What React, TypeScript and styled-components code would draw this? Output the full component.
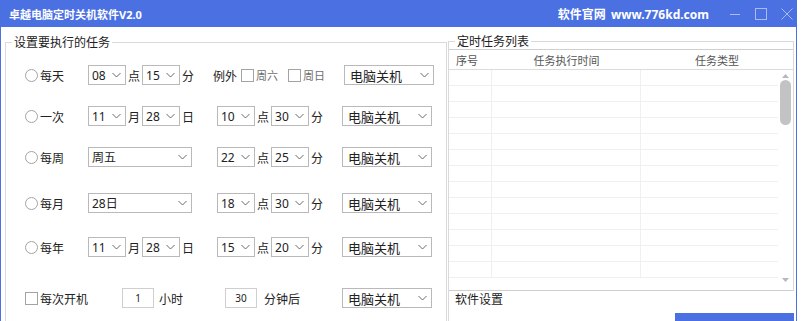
import styled, { createGlobalStyle } from "styled-components";

const GlobalStyle = createGlobalStyle`
    html, body {
        margin: 0;
        padding: 0;
        background: #ffffff;
    }
    body {
        font-family: "Noto Sans", "Noto Sans CJK SC", sans-serif;
        color: #222;
    }
`;

const Window = styled.div`
    width: 801px;
    height: 321px;
    box-sizing: border-box;
    border-left: 1px solid #4b70e2;
    border-right: 4px solid #ffffff;
    box-shadow: inset -1px 0 0 #4b70e2;
    overflow: hidden;
    display: flex;
    flex-direction: column;
    background: #fff;
`;

const TitleBar = styled.div`
    height: 27px;
    flex: none;
    background: #4b70e2;
    display: flex;
    align-items: center;
    padding-left: 8px;
    color: #fff;
    font-weight: 700;
`;

const AppName = styled.div`
    font-size: 11px;
    flex: 1;
`;

const SiteLink = styled.div`
    font-size: 12px;
    margin-right: 20px;
    word-spacing: 2px;
`;

const WinButtons = styled.div`
    display: flex;
    align-items: center;
    gap: 14px;
    margin-right: 4px;
`;

const Body = styled.div`
    flex: 1;
    display: flex;
    align-items: flex-start;
    min-height: 0;
`;

const Group = styled.fieldset<{ $w: number; $mt: number; $ml: number }>`
    margin: ${({ $mt }) => $mt}px 0 0 ${({ $ml }) => $ml}px;
    padding: 0;
    width: ${({ $w }) => $w}px;
    box-sizing: border-box;
    border: 1px solid #dadada;
    height: 340px;
    min-width: 0;
`;

const Legend = styled.legend`
    margin-left: 6px;
    padding: 0 2px;
    font-size: 12px;
    line-height: 16px;
    color: #222;
    font-family: "Noto Sans CJK SC", sans-serif;
`;

const Form = styled.div`
    display: flex;
    flex-direction: column;
`;

const Row = styled.div<{ $mt: number }>`
    display: grid;
    grid-template-columns: 63px 129px 125px auto;
    align-items: center;
    height: 20px;
    padding-left: 19px;
    margin-top: ${({ $mt }) => $mt}px;
    font-family: "Noto Sans CJK SC", sans-serif;
    font-size: 12px;
`;

const Cell = styled.div<{ $ml?: number }>`
    display: flex;
    align-items: center;
    gap: 2px;
    margin-left: ${({ $ml }) => $ml ?? 0}px;
`;

const Choice = styled.label`
    display: flex;
    align-items: center;
    gap: 2px;
    color: #222;
`;

const Radio = styled.span`
    width: 13px;
    height: 13px;
    box-sizing: border-box;
    border: 1px solid #a3a3a3;
    border-radius: 50%;
    background: #fff;
`;

const Check = styled.span<{ $ml?: number }>`
    width: 13px;
    height: 13px;
    box-sizing: border-box;
    border: 1px solid #a3a3a3;
    background: #fff;
    margin-left: ${({ $ml }) => $ml ?? 0}px;
`;

const Unit = styled.span<{ $ml?: number; $muted?: boolean; $size?: number }>`
    font-size: ${({ $size }) => $size ?? 12}px;
    color: ${({ $muted }) => ($muted ? "#6e6e6e" : "#222")};
    margin-left: ${({ $ml }) => $ml ?? 0}px;
    white-space: nowrap;
`;

const SelectBox = styled.div<{ $w: number; $ml?: number }>`
    width: ${({ $w }) => $w}px;
    height: 20px;
    box-sizing: border-box;
    border: 1px solid #b9b9b9;
    background: #fff;
    display: flex;
    align-items: center;
    justify-content: space-between;
    padding: 0 4px 0 3px;
    margin-left: ${({ $ml }) => $ml ?? 0}px;
    font-family: "Noto Sans", "Noto Sans CJK SC", sans-serif;
    font-size: 12px;
    color: #222;
`;

const ActionText = styled.span`
    font-family: "Noto Sans CJK SC", sans-serif;
    font-size: 13px;
    padding-left: 2px;
`;

const NumInput = styled.div<{ $ml: number }>`
    width: 32px;
    height: 20px;
    box-sizing: border-box;
    border: 1px solid #cfcfcf;
    display: flex;
    align-items: center;
    justify-content: center;
    font-family: "Noto Sans", sans-serif;
    font-size: 10px;
    margin-left: ${({ $ml }) => $ml}px;
    margin-right: 3px;
`;

const RightCol = styled.div`
    display: flex;
    flex-direction: column;
    margin-left: 1px;
    width: 346px;
`;

const TaskGroup = styled.fieldset`
    margin: 6px 0 0 0;
    padding: 0;
    border: 1px solid #dadada;
    border-bottom: none;
    min-width: 0;
`;

const List = styled.div`
    height: 240px;
    border-top: 1px solid #cfcfcf;
    border-bottom: 1px solid #cfcfcf;
    display: flex;
    flex-direction: column;
`;

const HeaderRow = styled.div`
    height: 19px;
    flex: none;
    display: grid;
    grid-template-columns: 43px 149px 1fr;
    align-items: center;
    border-bottom: 1px solid #dcdcdc;
    font-family: "Noto Sans CJK SC", sans-serif;
    font-size: 11px;
    color: #555;
`;

const HeaderCell = styled.div<{ $center?: boolean }>`
    padding-left: ${({ $center }) => ($center ? 0 : 7)}px;
    text-align: ${({ $center }) => ($center ? "center" : "left")};
`;

const ListBody = styled.div`
    flex: 1;
    display: flex;
    overflow: hidden;
`;

const Rows = styled.div`
    flex: 1;
    display: flex;
    flex-direction: column;
`;

const DataRow = styled.div`
    height: 16px;
    flex: none;
    box-sizing: border-box;
    display: grid;
    grid-template-columns: 43px 149px 1fr;
    border-bottom: 1px solid #f0f0f0;
`;

const DataCell = styled.div<{ $line?: boolean }>`
    border-right: ${({ $line }) => ($line ? "1px solid #f0f0f0" : "none")};
`;

const ScrollBar = styled.div`
    width: 15px;
    flex: none;
    display: flex;
    flex-direction: column;
    align-items: center;
    padding-top: 4px;
    box-sizing: border-box;
`;

const Thumb = styled.div`
    width: 11px;
    height: 45px;
    margin-top: 2px;
    border-radius: 6px;
    background: #c3c3c3;
`;

const ScrollFill = styled.div`
    flex: 1;
`;

const Settings = styled.div`
    display: flex;
    flex-direction: column;
    border-left: 1px solid #dadada;
    height: 40px;
`;

const SettingsTitle = styled.div`
    font-family: "Noto Sans CJK SC", sans-serif;
    font-size: 12px;
    color: #222;
    padding: 0 0 0 6px;
    line-height: 16px;
`;

const BlueButton = styled.div`
    align-self: flex-end;
    width: 119px;
    height: 20px;
    margin-top: 6px;
    background: #4b70e2;
`;

function Chevron() {
    return (
        <svg width="9" height="6" viewBox="0 0 9 6">
            <path d="M0.5 1 L4.5 5 L8.5 1" fill="none" stroke="#6a6a6a" strokeWidth="1" />
        </svg>
    );
}

function Select({ value, w, ml, action }: { value: string; w: number; ml?: number; action?: boolean }) {
    return (
        <SelectBox $w={w} $ml={ml}>
            {action ? <ActionText>{value}</ActionText> : <span>{value}</span>}
            <Chevron />
        </SelectBox>
    );
}

function TimePair({ a, b, ua, ub }: { a: string; b: string; ua: string; ub: string }) {
    return (
        <Cell>
            <Select value={a} w={38} />
            <Unit>{ua}</Unit>
            <Select value={b} w={38} />
            <Unit>{ub}</Unit>
        </Cell>
    );
}

function WindowControls() {
    return (
        <WinButtons>
            <svg width="12" height="12" viewBox="0 0 12 12">
                <path d="M1 6.5 H11" stroke="#a9bbf1" strokeWidth="1" />
            </svg>
            <svg width="12" height="12" viewBox="0 0 12 12">
                <rect x="0.5" y="0.5" width="11" height="11" fill="none" stroke="#a9bbf1" strokeWidth="1" />
            </svg>
            <svg width="12" height="12" viewBox="0 0 12 12">
                <path d="M0.5 0.5 L11.5 11.5 M11.5 0.5 L0.5 11.5" stroke="#a9bbf1" strokeWidth="1" />
            </svg>
        </WinButtons>
    );
}

const rowCount = 13;

export default function App() {
    return (
        <>
            <GlobalStyle />
            <Window>
                <TitleBar>
                    <AppName>卓越电脑定时关机软件V2.0</AppName>
                    <SiteLink>软件官网 www.776kd.com</SiteLink>
                    <WindowControls />
                </TitleBar>
                <Body>
                    <Group $w={442} $mt={7} $ml={4}>
                        <Legend>设置要执行的任务</Legend>
                        <Form>
                            <Row $mt={15}>
                                <Choice><Radio />每天</Choice>
                                <TimePair a="08" b="15" ua="点" ub="分" />
                                <Cell $ml={-4}>
                                    <Unit>例外</Unit>
                                    <Check $ml={2} />
                                    <Unit $muted $size={11}>周六</Unit>
                                    <Check $ml={8} />
                                    <Unit $muted $size={11}>周日</Unit>
                                </Cell>
                                <Select value="电脑关机" w={90} ml={2} action />
                            </Row>
                            <Row $mt={21}>
                                <Choice><Radio />一次</Choice>
                                <TimePair a="11" b="28" ua="月" ub="日" />
                                <TimePair a="10" b="30" ua="点" ub="分" />
                                <Select value="电脑关机" w={90} action />
                            </Row>
                            <Row $mt={21}>
                                <Choice><Radio />每周</Choice>
                                <Cell><Select value="周五" w={104} /></Cell>
                                <TimePair a="22" b="25" ua="点" ub="分" />
                                <Select value="电脑关机" w={90} action />
                            </Row>
                            <Row $mt={26}>
                                <Choice><Radio />每月</Choice>
                                <Cell><Select value="28日" w={104} /></Cell>
                                <TimePair a="18" b="30" ua="点" ub="分" />
                                <Select value="电脑关机" w={90} action />
                            </Row>
                            <Row $mt={24}>
                                <Choice><Radio />每年</Choice>
                                <TimePair a="11" b="28" ua="月" ub="日" />
                                <TimePair a="15" b="20" ua="点" ub="分" />
                                <Select value="电脑关机" w={90} action />
                            </Row>
                            <Row $mt={31}>
                                <Choice><Check />每次开机</Choice>
                                <Cell>
                                    <NumInput $ml={34}>1</NumInput>
                                    <Unit>小时</Unit>
                                </Cell>
                                <Cell>
                                    <NumInput $ml={8}>30</NumInput>
                                    <Unit $ml={2}>分钟后</Unit>
                                </Cell>
                                <Select value="电脑关机" w={90} action />
                            </Row>
                        </Form>
                    </Group>
                    <RightCol>
                        <TaskGroup>
                            <Legend>定时任务列表</Legend>
                            <List>
                                <HeaderRow>
                                    <HeaderCell>序号</HeaderCell>
                                    <HeaderCell $center>任务执行时间</HeaderCell>
                                    <HeaderCell $center>任务类型</HeaderCell>
                                </HeaderRow>
                                <ListBody>
                                    <Rows>
                                        {Array.from({ length: rowCount }, (_, i) => (
                                            <DataRow key={i}>
                                                <DataCell $line />
                                                <DataCell $line />
                                                <DataCell />
                                            </DataRow>
                                        ))}
                                    </Rows>
                                    <ScrollBar>
                                        <svg width="7" height="4" viewBox="0 0 7 4">
                                            <path d="M0 4 L3.5 0 L7 4 Z" fill="#b8b8b8" />
                                        </svg>
                                        <Thumb />
                                        <ScrollFill />
                                        <svg width="7" height="4" viewBox="0 0 7 4" style={{ marginBottom: 8 }}>
                                            <path d="M0 0 L3.5 4 L7 0 Z" fill="#b8b8b8" />
                                        </svg>
                                    </ScrollBar>
                                </ListBody>
                            </List>
                        </TaskGroup>
                        <Settings>
                            <SettingsTitle>软件设置</SettingsTitle>
                            <BlueButton />
                        </Settings>
                    </RightCol>
                </Body>
            </Window>
        </>
    );
}
